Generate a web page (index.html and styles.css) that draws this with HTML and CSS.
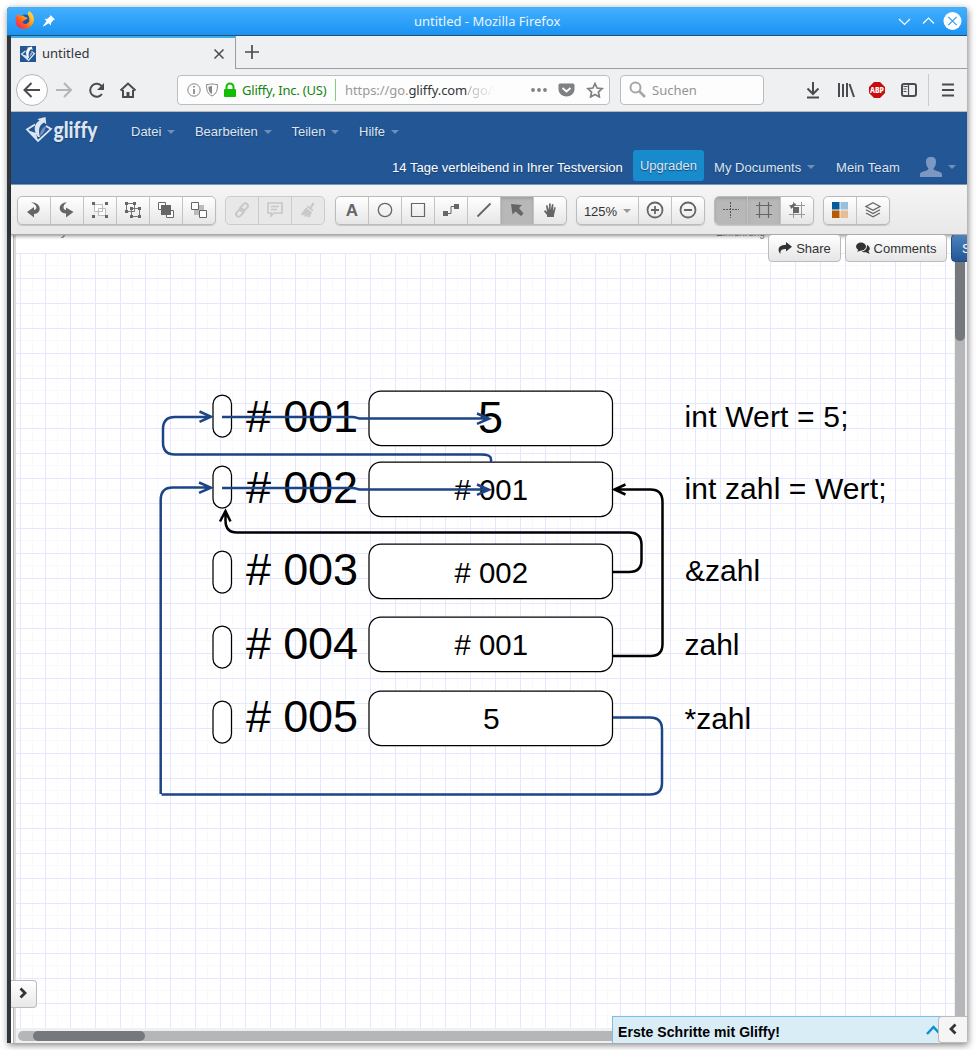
FILE: index.html
```html
<!DOCTYPE html>
<html lang="de">
<head>
<meta charset="utf-8">
<title>untitled</title>
<link rel="stylesheet" href="styles.css">
</head>
<body>
<div class="window">
  <header class="titlebar">
    <svg class="ff" width="20" height="20" viewBox="0 0 20 20"><defs><linearGradient id="fx" x1="1" y1="0" x2="0" y2="1"><stop offset="0" stop-color="#fff03c"/><stop offset=".35" stop-color="#ffb01f"/><stop offset=".65" stop-color="#ff5a1c"/><stop offset="1" stop-color="#e31587"/></linearGradient></defs><circle cx="10" cy="10.500" r="7" fill="#1655b5"/><path d="M3 3l2 2c3-1 4 0 5 1l3 1-3 2c-1 1-3 1-2 3 2 2 4 1 6-1 1-3 0-5-1-7 0-2 0-3 1-4 6 4 6 10 3 14-4 5-11 5-15 1C0 11 0 6 3 3z" fill="url(#fx)"/></svg>
    <svg class="pin" width="12" height="12" viewBox="0 0 12 12"><path d="M7.500 0L12 4.500 10.500 5 8 8l0 2.500-2.200-2.200L.5 11.500 0 11l3.500-5L1.500 3.800 4 4l3-2.500z" fill="#fff"/></svg>
    <span class="wtitle">untitled - Mozilla Firefox</span>
    <svg class="winctl" width="64" height="20" viewBox="0 0 64 20"><g fill="none" stroke="#fff" stroke-width="1.200"><path d="M1 8l5.500 5.500L12 8M25 12.500L30.500 7l5.500 5.500"/></g><circle cx="54.500" cy="10" r="9" fill="#fff"/><path d="M50.300 5.800l8.400 8.400M58.700 5.800l-8.400 8.400" stroke="#2a9bf2" stroke-width="1.200"/></svg>
  </header>
  <div class="inner">
    <div class="tabs">
      <div class="tab">
        <svg width="16" height="16" viewBox="0 0 16 16"><rect width="16" height="16" fill="#235694"/><path d="M5.500 5L1.500 8l7 6.500 6-7-3-2" fill="none" stroke="#dce6f4" stroke-width="1.200"/><path d="M1.500 8l6 2 1 4.500z" fill="#dce6f4"/><path d="M8 12C5 8 6 4 8 2.500L6.500 2 12 .5l.5 4-1.300-1.500C8.500 5 8 8 9 12z" fill="#fff"/><path d="M9.500 11c0-3 1-4.500 3-5.500 0 2.500-1 4-3 5.500z" fill="#8fa8cc"/></svg>
        <span>untitled</span>
        <svg class="tabx" width="12" height="12" viewBox="0 0 12 12"><path d="M1.500 1.500l9 9M10.500 1.500l-9 9" stroke="#4a4b50" stroke-width="1.500"/></svg>
      </div>
      <div class="strip"><svg width="14" height="14" viewBox="0 0 14 14"><path d="M7 0v14M0 7h14" stroke="#4a4b50" stroke-width="1.700"/></svg></div>
    </div>
    <div class="browser">
      <svg width="130" height="34" viewBox="0 0 130 34" fill="none" stroke="#4a4b50" stroke-width="2"><circle cx="17" cy="17" r="15.500" fill="#fdfdfd" stroke="#b4b5b8" stroke-width="1"/><path d="M25 17H10M16.500 10l-7 7 7 7"/><path d="M41 17h14M49 10l7 7-7 7" stroke="#b4b5b8"/><path d="M87 13.500A6.500 6.500 0 1 0 87 21" /><path d="M89 10v7h-7z" fill="#4a4b50" stroke="none"/><path d="M105.500 17.500L113 10.500l7.500 7"/><path d="M108 17v7h10v-7" /><path d="M113 24v-5" stroke-width="3"/></svg>
      <div class="url">
        <svg width="50" height="16" viewBox="0 0 50 16"><circle cx="7" cy="8" r="6.200" fill="none" stroke="#85868a"/><path d="M7 7v5M7 4v1.500" stroke="#85868a" stroke-width="1.700"/><path d="M25 2c-2 0-3 .6-5.500.6 0 6 1 9 5.500 11.400 4.500-2.400 5.500-5.400 5.500-11.400C28 2.600 27 2 25 2z" fill="none" stroke="#85868a"/><path d="M25 4c-1 0-2 .4-3.500.5 0 4 .8 6 3.500 7.500z" fill="#85868a"/><rect x="37" y="7" width="12" height="8" rx="1" fill="#12bc00"/><path d="M39.500 8V5a3.500 3.500 0 0 1 7 0v3" fill="none" stroke="#12bc00" stroke-width="2"/></svg>
        <span class="ident">Gliffy, Inc. (US)</span>
        <span class="addr">https://go.<b>gliffy.com</b><i>/go/h</i></span>
        <svg width="76" height="16" viewBox="0 0 76 16"><g fill="#7e8084"><circle cx="3" cy="8" r="1.900"/><circle cx="9" cy="8" r="1.900"/><circle cx="15" cy="8" r="1.900"/></g><path d="M30 1.500h13q1.500 0 1.500 1.500v4.500a8 7 0 0 1-16 0V3q0-1.500 1.500-1.500z" fill="#7e8084"/><path d="M32.500 6l4 3.500 4-3.500" fill="none" stroke="#fff" stroke-width="2"/><path d="M65 1.500l2.100 4.500 5 .6-3.700 3.400 1 5-4.400-2.500-4.400 2.500 1-5-3.700-3.400 5-.6z" fill="none" stroke="#7e8084" stroke-width="1.700"/></svg>
      </div>
      <div class="search"><svg width="17" height="17" viewBox="0 0 17 17"><circle cx="6.500" cy="6.500" r="5" fill="none" stroke="#a5a6a9" stroke-width="2"/><path d="M10 10l6 6" stroke="#a5a6a9" stroke-width="2.500"/></svg><span>Suchen</span></div>
      <svg class="tools" width="150" height="34" viewBox="0 0 150 34" fill="none" stroke="#4a4b50" stroke-width="2"><path d="M7 9v12M1.500 15.500L7 21l5.500-5.500M1 24.500h12"/><path d="M33 10v14M37 11v13M41 10v14" /><path d="M43.500 11l4.500 13"/><path d="M68 9h6l5 5v6l-5 5h-6l-5-5v-6z" fill="#c70d0d" stroke="none"/><text x="71" y="20" font-size="8" class="abp" textLength="14" lengthAdjust="spacingAndGlyphs">ABP</text><rect x="96" y="11" width="14" height="12" rx="2"/><path d="M102.500 10v14M97.500 13.500h4M97.500 16h3M97.500 18.500h3" stroke-width="1.200"/><path d="M122.500 1v32" stroke="#ccc" stroke-width="1"/><path d="M136 11.500h12M136 17h12M136 22.500h12"/></svg>
    </div>
    <div class="app">
      <div class="nav">
        <svg class="logo" width="80" height="34" viewBox="0 0 80 34"><path d="M10 8.500L2 13.500l11 11.500L26 13l-5-3" fill="none" stroke="#dde5f1" stroke-width="1.800"/><path d="M2 14l9 3 2 8z" fill="#dde5f1"/><path d="M13 21C8 14 9 8 14.500 4.500L12.500 3l8-2 .8 7.500-2-2C14 9 13 14 15 21z" fill="#dde5f1"/><path d="M15 20c0-5 2-8 6-10-1 5-2 7-6 10z" fill="#7590ba"/><text x="28.500" y="22" class="brand" textLength="44" lengthAdjust="spacingAndGlyphs">gliffy</text></svg>
        <div class="menus"><span class="m">Datei</span><span class="m">Bearbeiten</span><span class="m">Teilen</span><span class="m">Hilfe</span></div>
        <div class="account"><span class="trial">14 Tage verbleibend in Ihrer Testversion</span><span class="up">Upgraden</span><span class="m docs">My Documents</span><span class="team">Mein Team</span><span class="m user"><svg width="22" height="20" viewBox="0 0 22 20"><path d="M11 0c4 0 5 2 5 5s-1 5-2.500 6.500c0 3 8.500 2 8.500 6V20H0v-2.500c0-4 8.500-3 8.500-6C7 10 6 8 6 5s1-5 5-5z" fill="#7c98c2"/></svg></span></div>
      </div>
      <div class="toolbar">
        <div class="group">
          <span><svg viewBox="0 0 16 16"><path d="M5 .5c10-1 12 11 3 11.500v3.500L1 10l7-5v3c4-.5 3-6-3-7.500z"/></svg></span>
          <span><svg viewBox="0 0 16 16"><path d="M8 .5C-1 0-2 11 7 11.500v4l7.500-5.500L7 5.500V8C4 8 3 3 8 .5z"/></svg></span>
          <span><svg viewBox="0 0 16 16"><g fill="#fff" stroke="#bbb"><path d="M2.500 2.500h8v7h-8zM6.500 6.500h7v7h-7z"/></g><path d="M0 0h3v3H0zM13 0h3v3h-3zM0 13h3v3H0zM13 13h3v3h-3z"/></svg></span>
          <span><svg viewBox="0 0 16 16"><g fill="none" stroke="#777"><path d="M1.500 1.500h8v8h-8zM6.500 6.500h8v8h-8z"/></g><path d="M0 0h3v3H0zM8 0h3v3H8zM0 8h3v3H0zM5 5h3v3H5zM13 5h3v3h-3zM5 13h3v3H5zM13 13h3v3h-3z"/></svg></span>
          <span><svg viewBox="0 0 16 16"><path d="M.5.500h7v7h-7zM8.500 8.500h7v7h-7z" fill="#fff" stroke="#666"/><path d="M3 3h10v10H3z"/></svg></span>
          <span><svg viewBox="0 0 16 16"><path d="M3 3h10v10H3z" fill="#bbb"/><path d="M.5.500h7v7h-7zM8.500 8.500h7v7h-7z" fill="#fff" stroke="#666"/></svg></span>
        </div>
        <div class="group off">
          <span><svg viewBox="0 0 16 16"><g fill="none" stroke="#c8c8c8" stroke-width="2"><rect x="6" y="3" width="9" height="5" rx="2.500" transform="rotate(-45 10 6)"/><rect x="1" y="8" width="9" height="5" rx="2.500" transform="rotate(-45 6 10)"/></g></svg></span>
          <span><svg viewBox="0 0 16 16"><path d="M1 1h14v10H7l-3 3v-3H1zM4 4.500h8M4 7.500h6" fill="none" stroke="#c8c8c8" stroke-width="1.700"/></svg></span>
          <span><svg viewBox="0 0 16 16"><path d="M12.500.5l2 1-3 5 2 1.500-1 1.500-6-5 1.200-1L10 5zM6 5.500l6 5-2.500 5-2-.5 1-2-2.500 2-2-1 1.500-2-3 1.500L1 12z" fill="#c8c8c8"/></svg></span>
        </div>
        <div class="group shapes">
          <span><svg viewBox="0 0 16 16"><text x="8" y="14" class="a">A</text></svg></span>
          <span><svg viewBox="0 0 16 16"><circle cx="8" cy="8" r="6.700" fill="none" stroke="#666" stroke-width="1.300"/></svg></span>
          <span><svg viewBox="0 0 16 16"><path d="M1.500 1.500h13v13h-13z" fill="none" stroke="#666" stroke-width="1.200"/></svg></span>
          <span><svg viewBox="0 0 16 16"><path d="M0 9h5v5H0zM11 2h5v5h-5z"/><path d="M4 11.500h4v-7h4" fill="none" stroke="#666"/></svg></span>
          <span><svg viewBox="0 0 16 16"><path d="M1.500 14.500l13-13" stroke="#666" stroke-width="1.800"/></svg></span>
          <span class="on"><svg viewBox="0 0 16 16"><path d="M2 2l11 1-3 3 4.500 5.500-2.500 2.500L6.500 9.500l-3 3z"/></svg></span>
          <span><svg viewBox="0 0 16 16"><path d="M5 15v-2L2 9.500l1-1.500 2 2-1-6.500L5.300 3 7 8V1.500h1.700V8L10 2l1.500.5L11 9l1.500-4 1.300.500L12 13v2z"/></svg></span>
        </div>
        <div class="group">
          <span class="zoom m">125%</span>
          <span><svg class="big" viewBox="0 0 18 18"><g fill="none" stroke="#666" stroke-width="1.800"><circle cx="9" cy="9" r="7.500"/><path d="M5 9h8M9 5v8"/></g></svg></span>
          <span><svg class="big" viewBox="0 0 18 18"><g fill="none" stroke="#666" stroke-width="1.800"><circle cx="9" cy="9" r="7.500"/><path d="M5 9h8"/></g></svg></span>
        </div>
        <div class="group">
          <span class="on"><svg viewBox="0 0 16 16"><path d="M7.500 0v16M0 7.500h16" fill="none" stroke="#555" stroke-dasharray="2 1"/></svg></span>
          <span class="on"><svg viewBox="0 0 16 16"><path d="M3.500 0v16M12.500 0v16M0 3.500h16M0 12.500h16" stroke="#666" stroke-width="1.200"/></svg></span>
          <span><svg viewBox="0 0 16 16"><path d="M4.500 0v16M12.500 0v16M0 3.500h16M0 12.500h16" stroke="#999"/><path d="M4 5h6v6H4zM1 4l3-2 2-1 1 2-5 4z" /></svg></span>
        </div>
        <div class="group">
          <span><svg viewBox="0 0 16 16"><path d="M0 0h7.500v7.500H0z" fill="#005a9c"/><path d="M8.500 0H16v7.500H8.500z" fill="#9bbfda"/><path d="M0 8.500h7.500V16H0z" fill="#b85a00"/><path d="M8.500 8.500H16V16H8.500z" fill="#e3bd93"/></svg></span>
          <span><svg viewBox="0 0 16 16"><path d="M8 .8L15 4.500 8 8.300 1 4.500zM1 7.800L8 11.500l7-3.700M1 11L8 14.800 15 11" fill="none" stroke="#666" stroke-width="1.300"/></svg></span>
        </div>
      </div>
      <div class="canvas">
        <svg width="956" height="808" viewBox="11 235 956 808">
          <defs>
            <pattern id="grid" x="20" y="253" width="25" height="25" patternUnits="userSpaceOnUse"><path d="M12.500 0v25M0 12.500h25" stroke="#f8f8ff"/><path d="M.5 0v25M0 .5h25" stroke="#e6e6ff"/></pattern>
            <g id="pill"><rect x="213" width="18.500" height="42" rx="9.250"/></g>
            <g id="cell"><rect x="369" width="243.500" height="54.500" rx="12"/></g>
          </defs>
          <path d="M11 235h956v808H11z" fill="#fff"/>
          <path d="M13 235h3v808h-3z" fill="#ddd"/><path d="M13 235h1v808h-1z" fill="#b5b5b5"/>
          <text x="36" y="235" class="peek">Gliffy</text><text x="716" y="236" class="peek" textLength="49" lengthAdjust="spacingAndGlyphs">Einführung</text>
          <path d="M16 253h938v775H16z" fill="url(#grid)"/>
          <g class="shape"><use href="#pill" y="395"/><use href="#pill" y="466"/><use href="#pill" y="551"/><use href="#pill" y="626"/><use href="#pill" y="701"/>
          <use href="#cell" y="391"/><use href="#cell" y="462"/><use href="#cell" y="544"/><use href="#cell" y="617"/><use href="#cell" y="691"/></g>
          <g class="t45"><text x="246" y="432" textLength="112">#&#160;001</text><text x="246" y="503" textLength="112">#&#160;002</text><text x="246" y="585" textLength="112">#&#160;003</text><text x="246" y="658.500" textLength="112">#&#160;004</text><text x="246" y="732" textLength="112">#&#160;005</text><text x="478" y="433">5</text></g>
          <g class="t30"><text x="454.500" y="499.500" textLength="73.500" lengthAdjust="spacingAndGlyphs">#&#160;001</text><text x="454.500" y="582.500" textLength="73.500" lengthAdjust="spacingAndGlyphs">#&#160;002</text><text x="454.500" y="654.500" textLength="73.500" lengthAdjust="spacingAndGlyphs">#&#160;001</text><text x="483" y="728.500">5</text>
          <text x="684.500" y="427" textLength="164">int Wert = 5;</text><text x="684.500" y="499" textLength="202">int zahl = Wert;</text><text x="685" y="581">&amp;zahl</text><text x="684.500" y="655">zahl</text><text x="684.500" y="729">*zahl</text></g>
          <g class="wire blue"><path d="M491 462v-3q0-4.500-10-4.500H175q-12 0-12-12V429q0-12 12-12h35M199.500 411.500l11.500 5.200-11.500 5.200"/><path d="M222 417h130q3 0 5 .8t6 .8h123M477 413.500l12 5.200-12 5.200"/><path d="M222 488h130q3 0 5 .8t6 .8h123M477 484.500l12 5.200-12 5.200"/><path d="M613 717.500h37q12 0 12 12V783q0 11.500-12 11.500H161.500M160.700 794V500q0-12.500 12-12.500H209M199 482.500l12 5.200-12 5.200"/></g>
          <g class="wire"><path d="M613 572h16q12.500 0 12.500-12v-15q0-12.500-12.500-12.500H237q-11.500 0-11.500-12V512M220 521.500l5.500-10.500 5 10.500"/><path d="M613 656h37.500q12 0 12-12V502q0-12.500-12-12.500H616M625.500 484.500l-11 5 11 5"/></g>
          <path d="M954 235h13v808h-13zM16 1028h951v15H16z" fill="#eff0f1"/>
          <rect x="955" y="237" width="10" height="806" rx="5" fill="#b5b6b8"/><rect x="955" y="237" width="10" height="104" rx="5" fill="#75787c"/>
          <rect x="18" y="1031" width="936" height="10" rx="5" fill="#b5b6b8"/><rect x="33" y="1031" width="112" height="10" rx="5" fill="#75787c"/>
        </svg>
        <div class="actions"><span class="btn share"><svg width="14" height="13" viewBox="0 0 14 13"><path fill="#333" d="M8 0l6 4.800L8 9.500V7C4 7 2 8 2.500 12-1 8 0 3 8 2.800z"/></svg>Share</span><span class="btn comm"><svg width="14" height="12" viewBox="0 0 14 12" fill="#333"><ellipse cx="5" cy="4.500" rx="5" ry="4"/><path d="M1 10l2-3 3 1zM11 3c4 2 3 5 1.500 6l1.200 3L10 10.200C8 10.500 6 10 5.500 9.500 10 9 11 6 11 3z"/></svg>Comments</span><span class="btn save">Save</span></div>
        <div class="expand"><svg width="8" height="12" viewBox="0 0 8 12"><path d="M1.500 1.500L6 6l-4.500 4.500" fill="none" stroke="#333" stroke-width="2.800"/></svg></div>
        <div class="start"><b>Erste Schritte mit Gliffy!</b><svg width="14" height="10" viewBox="0 0 14 10"><path d="M1 9l6.500-7L14 9" fill="none" stroke="#0d8ed0" stroke-width="2.500"/></svg></div>
        <div class="collapse"><svg width="8" height="12" viewBox="0 0 8 12"><path d="M6.500 1.500L2 6l4.500 4.500" fill="none" stroke="#333" stroke-width="2.800"/></svg></div>
      </div>
    </div>
  </div>
</div>
</body>
</html>
```
FILE: styles.css
```css
* { box-sizing: border-box; }
body { margin: 0; padding: 7px; background: #fff; }
svg { display: block; flex: none; }
.window { width: 960px; height: 1036px; border-radius: 4px 4px 0 0; box-shadow: 1px 2px 7px rgba(0,0,0,.5); overflow: hidden; background: #31363b; font: 13px "Noto Sans", sans-serif; }
.titlebar { display: flex; align-items: center; height: 29px; padding: 0 5px 0 8px; background: linear-gradient(#44b0ff, #1b93f2); border-bottom: 1px solid #27506f; color: #fff; }
.pin { margin-left: 8px; }
.wtitle { margin-left: 359px; flex: 1; white-space: nowrap; color: #e9f5ff; }
.inner { margin-left: 4px; }
.tabs { display: flex; height: 33px; background: #eff0f1; }
.tab { display: flex; align-items: center; width: 224px; padding: 0 0 0 9px; border-top: 2px solid #3daee9; background: #eff0f2; color: #31363b; }
.tab span { margin-left: 6px; flex: 1; padding-bottom: 1px; }
.tabx { margin-right: 10px; }
.strip { flex: 1; border-left: 1px solid #9b9da0; border-bottom: 1px solid #9b9da0; padding: 9px 0 0 9px; }
.browser { display: flex; align-items: center; height: 43px; padding: 0 0 1px 4px; background: #eff0f2; border-bottom: 1px solid #b9b9b9; }
.url, .search { height: 30px; border: 1px solid #bcbdbf; border-radius: 4px; background: #fdfdfd; display: flex; align-items: center; }
.url { width: 433px; margin-left: 32px; padding-left: 9px; }
.ident { color: #12850d; margin-left: 5px; width: 94px; height: 22px; line-height: 22px; border-right: 1px solid #7ed177; white-space: nowrap; letter-spacing: -.22px; }
.addr { margin-left: 9px; width: 185px; color: #98999b; white-space: nowrap; letter-spacing: -.07px; }
.addr b { font-weight: normal; color: #31363b; }
.addr i { font-style: normal; background: linear-gradient(90deg, #aaa, #fff 90%); -webkit-background-clip: text; color: transparent; }
.search { width: 144px; margin-left: 10px; padding-left: 8px; color: #929497; }
.search span { margin-left: 6px; }
.tools { margin-left: 42px; }
.abp { fill: #fff; stroke: none; text-anchor: middle; font-family: "Noto Sans", sans-serif; font-weight: 800; }
.app { font-family: "Liberation Sans", Arial, sans-serif; }
.nav { position: relative; height: 73px; background: #235694; color: #dde5f1; display: grid; grid-template-columns: 120px 1fr; grid-template-rows: 38px 34px; border-bottom: 1px solid #8ea8c8; text-shadow: 0 1px 1px #183f70; }
.logo { margin: 4px 0 0 14px; }
.brand { font: 900 23px Lato, sans-serif; fill: #dde5f1; font-variant-ligatures: none; }
.menus { display: flex; gap: 19.600px; align-items: center; padding-top: 1px; }
.m { display: flex; align-items: center; white-space: nowrap; }
.m::after { content: ""; margin-left: 6px; border: 4px solid transparent; border-top-color: #6f8fba; border-bottom: 0; }
.account { grid-column: 1 / 3; display: flex; align-items: center; padding-left: 381px; white-space: nowrap; }
.trial { width: 241px; color: #fff; letter-spacing: .02px; }
.up { background: #188bcc; height: 31px; width: 71px; text-align: center; line-height: 32px; border-radius: 3px; flex: none; margin-top: -3px; }
.docs { width: 132px; padding-left: 10px; letter-spacing: .05px; }
.team { width: 84px; letter-spacing: .05px; }
.toolbar { position: relative; z-index: 2; height: 50px; background: linear-gradient(#f5f5f5, #e8e8e8); border-bottom: 1px solid #aaa; box-shadow: 0 1px 4px rgba(0,0,0,.45); display: flex; gap: 9px; padding: 11px 0 0 6px; color: #333; }
.group { display: flex; height: 29px; border: 1px solid #bbb; border-radius: 5px; overflow: hidden; background: linear-gradient(#fff, #e6e6e6); box-shadow: 0 1px 1px rgba(0,0,0,.15); }
.shapes { margin-left: 1px; }
.group span { width: 33px; display: flex; justify-content: center; align-items: center; border-right: 1px solid #c3c3c3; padding-bottom: 2px; }
.group span:last-child { border: 0; width: 32px; }
.group svg { width: 16px; height: 16px; fill: #666; overflow: visible; }
.group .big { width: 18px; height: 18px; }
.group .on { background: #b8b8b8; box-shadow: inset 0 2px 3px rgba(0,0,0,.12); }
.group .zoom { width: 62px; padding: 1px 0 0; }
.zoom::after { border-top-color: #999; }
.off { background: #e8e8e8; border-color: #ccc; box-shadow: none; }
.off span { border-color: #ccc; }
.a { font: bold 17px "Liberation Sans", sans-serif; text-anchor: middle; }
.canvas { position: relative; height: 809px; overflow: hidden; background: #fff; }
.canvas text { font-family: "Liberation Sans", Arial, sans-serif; }
.peek { font-size: 14px; fill: #888; }
.shape { fill: #fff; stroke: #000; stroke-width: 1.250; }
.t45 { font-size: 45px; }
.t30 { font-size: 30px; }
.wire { fill: none; stroke: #000; stroke-width: 2.500; }
.blue { stroke: #1c4587; }
.actions { position: absolute; z-index: 3; left: 757px; top: -1px; display: flex; gap: 4px; }
.btn { display: flex; gap: 4px; align-items: center; justify-content: center; height: 28px; border: 1px solid #bbb; border-radius: 4px; background: linear-gradient(#fff, #e6e6e6); color: #333; }
.share { width: 73px; }
.comm { width: 102px; }
.save { width: 70px; justify-content: flex-start; padding-left: 10px; background: linear-gradient(#4d83bb, #235694); border-color: #1f4d85; color: #fff; }
.expand, .collapse, .start { position: absolute; display: flex; align-items: center; border: 1px solid #bbb; }
.expand { left: 0; top: 745px; width: 26px; height: 28px; padding: 0 0 3px 7.500px; border-left: 0; border-radius: 0 4px 4px 0; background: linear-gradient(#fff, #e8e8e8); }
.start { left: 601px; bottom: 0; width: 330px; height: 28px; background: #d9edf7; border-color: #7cbfe6; border-bottom: 0; justify-content: space-between; padding: 3px 1px 0 5px; font-size: 14px; letter-spacing: .07px; color: #000; }
.start svg { margin-top: -4px; }
.collapse { right: 0; bottom: 1px; width: 29px; height: 27px; padding: 0 0 2px 10px; border-right: 0; border-radius: 4px 0 0 4px; background: #f5f5f5; }
```
